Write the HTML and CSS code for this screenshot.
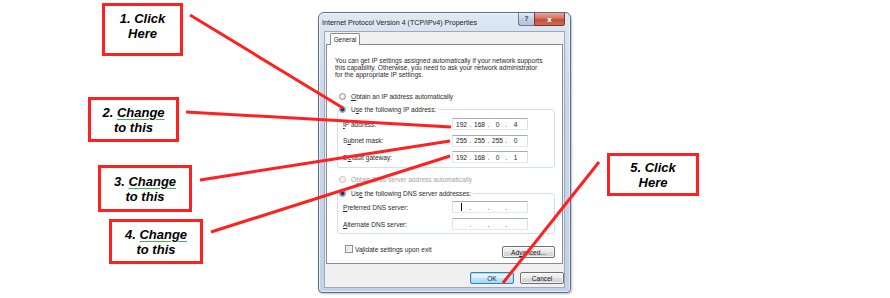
FILE: index.html
```html
<!DOCTYPE html>
<html>
<head>
<meta charset="utf-8">
<title>IPv4 Properties</title>
<link rel="stylesheet" href="styles.css">
</head>
<body>
<div class="canvas">
  <div class="window">
    <div class="titlebar">
      <span class="title">Internet Protocol Version 4 (TCP/IPv4) Properties</span>
      <div class="caption-btns">
        <span class="cap-btn help">?</span>
        <span class="cap-btn close">x</span>
      </div>
    </div>
    <div class="client">
      <div class="tabs"><span class="tab">General</span></div>
      <div class="panel">
        <p class="intro">You can get IP settings assigned automatically if your network supports<br>this capability. Otherwise, you need to ask your network administrator<br>for the appropriate IP settings.</p>
        <div class="radio-row first"><span class="radio"></span><span><u>O</u>btain an IP address automatically</span></div>
        <fieldset class="group g1">
          <legend class="legend"><span class="radio on"></span><span>U<u>s</u>e the following IP address:</span></legend>
          <div class="rows">
            <span class="lbl"><u>I</u>P address:</span>
            <span class="ip"><span class="o">192</span><span class="d">.</span><span class="o">168</span><span class="d">.</span><span class="o">0</span><span class="d">.</span><span class="o">4</span></span>
            <span class="lbl">S<u>u</u>bnet mask:</span>
            <span class="ip"><span class="o">255</span><span class="d">.</span><span class="o">255</span><span class="d">.</span><span class="o">255</span><span class="d">.</span><span class="o">0</span></span>
            <span class="lbl">D<u>e</u>fault gateway:</span>
            <span class="ip"><span class="o">192</span><span class="d">.</span><span class="o">168</span><span class="d">.</span><span class="o">0</span><span class="d">.</span><span class="o">1</span></span>
          </div>
        </fieldset>
        <div class="radio-row disabled"><span class="radio"></span><span>O<u>b</u>tain DNS server address automatically</span></div>
        <fieldset class="group g2">
          <legend class="legend"><span class="radio on"></span><span>Us<u>e</u> the following DNS server addresses:</span></legend>
          <div class="rows">
            <span class="lbl"><u>P</u>referred DNS server:</span>
            <span class="ip"><span class="o"><span class="caret"></span></span><span class="d">.</span><span class="o"></span><span class="d">.</span><span class="o"></span><span class="d">.</span><span class="o"></span></span>
            <span class="lbl"><u>A</u>lternate DNS server:</span>
            <span class="ip"><span class="o"></span><span class="d">.</span><span class="o"></span><span class="d">.</span><span class="o"></span><span class="d">.</span><span class="o"></span></span>
          </div>
        </fieldset>
        <div class="bottom-row">
          <label class="check-row"><span class="checkbox"></span><span>Va<u>l</u>idate settings upon exit</span></label>
          <span class="btn adv">Ad<u>v</u>anced...</span>
        </div>
      </div>
      <div class="footer">
        <span class="btn default">OK</span>
        <span class="btn">Cancel</span>
      </div>
    </div>
  </div>

  <svg class="arrows" width="890" height="298" viewBox="0 0 890 298">
    <line x1="190" y1="15" x2="343" y2="108"/>
    <line x1="186" y1="112" x2="451" y2="127"/>
    <line x1="200" y1="180" x2="450" y2="141"/>
    <line x1="211" y1="232" x2="450" y2="156"/>
    <line x1="599" y1="162" x2="503" y2="283"/>
  </svg>

  <div class="callout c1"><span>1. Click<br>Here</span></div>
  <div class="callout c2"><span>2. <span class="chk">Change</span><br>to this</span></div>
  <div class="callout c3"><span>3. <span class="chk">Change</span><br>to this</span></div>
  <div class="callout c4"><span>4. <span class="chk">Change</span><br>to this</span></div>
  <div class="callout c5"><span>5. Click<br>Here</span></div>
</div>
</body>
</html>
```

FILE: styles.css
```css
* { box-sizing: border-box; }
body { margin: 0; background: #fff; }
.canvas {
  position: relative;
  width: 890px;
  height: 298px;
  overflow: hidden;
  background: #fff;
  font-family: "Liberation Sans", Arial, sans-serif;
  color: #000;
}

/* ---------- dialog window ---------- */
.window {
  position: absolute;
  left: 318px;
  top: 12px;
  width: 253px;
  height: 281px;
  border: 1px solid #5b6e86;
  border-radius: 6px 6px 4px 4px;
  background: linear-gradient(#dfe8f3, #c9d7e9 30%, #c2d2e7);
  box-shadow: inset 0 0 0 1px rgba(255,255,255,0.55), 1px 1px 2px rgba(0,0,0,0.25);
  padding: 0 5px 4px;
  display: flex;
  flex-direction: column;
}
.titlebar {
  height: 18px;
  flex: none;
  display: flex;
  justify-content: space-between;
  align-items: flex-start;
}
.title {
  font-size: 7.1px;
  margin: 5.5px 0 0 -2px;
  white-space: nowrap;
  color: #1a1a1a;
}
.caption-btns { display: flex; }
.cap-btn {
  height: 13px;
  display: flex;
  align-items: center;
  justify-content: center;
  font-family: "DejaVu Sans", sans-serif;
  font-weight: bold;
  font-size: 7px;
  color: #fff;
  border: 1px solid #6a7c94;
  border-top: none;
}
.cap-btn.help {
  width: 16px;
  border-radius: 0 0 0 3px;
  background: linear-gradient(#e4ebf4, #c2cfe0 50%, #b3c3d8);
  color: #4a5d78;
  border-right: none;
}
.cap-btn.close {
  width: 31px;
  border-radius: 0 0 3px 0;
  border-color: #7a3a30;
  background: linear-gradient(#e8a497, #d7705f 45%, #c24b36 55%, #cf6c52);
  font-size: 7.5px;
}

.client {
  flex: 1;
  display: flex;
  flex-direction: column;
  background: #f0f0f0;
  border: 1px solid #9aaabf;
  padding-top: 1px;
}
.tabs {
  display: flex;
  padding-left: 5px;
  height: 12px;
  position: relative;
  z-index: 1;
}
.tab {
  width: 30px;
  height: 12px;
  background: #fff;
  border: 1px solid #898c95;
  border-bottom: none;
  border-radius: 2px 2px 0 0;
  font-size: 6.4px;
  display: flex;
  align-items: center;
  justify-content: center;
  color: #222;
}
.panel {
  flex: 1;
  margin: -1px 1px 0;
  background: #fff;
  border: 1px solid #898c95;
  padding: 11.5px 7px 0 8px;
  font-size: 6.6px;
  color: #2a2a2a;
}
.intro {
  margin: 0;
  line-height: 7px;
  white-space: nowrap;
}
u { text-decoration-thickness: 0.5px; text-underline-offset: 1px; }

.radio-row, .legend {
  display: flex;
  align-items: center;
  height: 10px;
  white-space: nowrap;
}
.radio-row { padding-left: 4px; }
.radio-row.first { margin-top: 13.5px; }
.radio-row.disabled { margin-top: 6px; color: #a3a3a3; }
.radio {
  width: 7px;
  height: 7px;
  border-radius: 50%;
  border: 1px solid #8d8d8d;
  background: radial-gradient(circle at 40% 40%, #ffffff, #d6d6d6);
  margin-right: 5px;
  flex: none;
}
.radio.on {
  background: radial-gradient(circle, #1f3c66 0 1.6px, #6f8fb8 2.1px, #e6ebf2 2.6px, #cfd5dd);
}
.disabled .radio { border-color: #c2c2c2; background: #f3f3f3; }

.group {
  margin: 3px 0 0 2px;
  width: 218px;
  border: 1px solid #d5dfe5;
  border-radius: 3px;
  padding: 4px 0 4px 5px;
  min-width: 0;
}
.group.g2 { margin-top: 4px; padding-top: 3px; padding-bottom: 3px; }
.legend {
  padding: 0 2px 0 0;
  margin-left: -4px;
  background: #fff;
}
.rows {
  display: grid;
  grid-template-columns: 109px 76px;
  grid-auto-rows: 12px;
  row-gap: 4.5px;
  align-items: center;
}
.g2 .rows { row-gap: 5px; }
.lbl { white-space: nowrap; }
.ip {
  height: 12px;
  border: 1px solid #abadb3;
  border-color: #abadb3 #dbdfe6 #e3e9ef #e2e3ea;
  background: #fff;
  display: flex;
  align-items: center;
  padding-left: 2px;
  font-size: 6.6px;
  color: #222;
}
.ip .o { width: 13px; text-align: center; display: flex; justify-content: center; }
.ip .d { width: 5px; text-align: center; }
.caret { width: 1px; height: 8px; background: #000; }

.bottom-row {
  margin-top: 12px;
  display: flex;
  justify-content: space-between;
  align-items: flex-start;
}
.check-row {
  display: flex;
  align-items: center;
  height: 10px;
  margin-top: -2px;
  padding-left: 10px;
  white-space: nowrap;
}
.checkbox {
  width: 8px;
  height: 8px;
  border: 1px solid #8e8f8f;
  background: linear-gradient(135deg, #d9dce0, #f7f7f7);
  box-shadow: inset 0 0 0 1px #f4f4f4;
  margin-right: 2px;
}
.btn {
  height: 12px;
  width: 44px;
  border: 1px solid #707070;
  border-radius: 2px;
  background: linear-gradient(#f2f2f2 0, #ebebeb 50%, #dddddd 50%, #cfcfcf);
  box-shadow: inset 0 0 0 1px rgba(255,255,255,0.7);
  display: flex;
  align-items: center;
  justify-content: center;
  font-size: 6.6px;
  color: #222;
}
.btn.adv { width: 53px; }
.footer {
  flex: none;
  height: 23px;
  display: flex;
  justify-content: flex-end;
  gap: 6px;
  padding: 8px 0 0;
}
.btn.default {
  border-color: #3c7fb1;
  box-shadow: inset 0 0 0 1px #a6dcf5;
  background: linear-gradient(#eaf6fd 0, #d9f0fc 50%, #bee6fd 50%, #a7d9f5);
}

/* ---------- annotations ---------- */
.arrows {
  position: absolute;
  left: 0;
  top: 0;
  pointer-events: none;
}
.arrows line {
  stroke: #ff2020;
  stroke-width: 3;
}
.callout {
  position: absolute;
  border: 3px solid #ff2020;
  background: #fff;
  display: flex;
  align-items: center;
  justify-content: center;
  text-align: center;
  font-style: italic;
  font-weight: bold;
  font-size: 13px;
  line-height: 15px;
  color: #000;
}
.chk {
  text-decoration: underline;
  text-decoration-color: #4caf50;
  text-decoration-thickness: 1px;
  text-underline-offset: 2px;
}
.c1 { left: 102px; top: 3px; width: 81px; height: 53px; padding-bottom: 7px; }
.c2 { left: 88px; top: 97px; width: 91px; height: 45px; }
.c3 { left: 98px; top: 165px; width: 94px; height: 47px; }
.c4 { left: 109px; top: 219px; width: 94px; height: 45px; }
.c5 { left: 607px; top: 153px; width: 92px; height: 43px; }
```
